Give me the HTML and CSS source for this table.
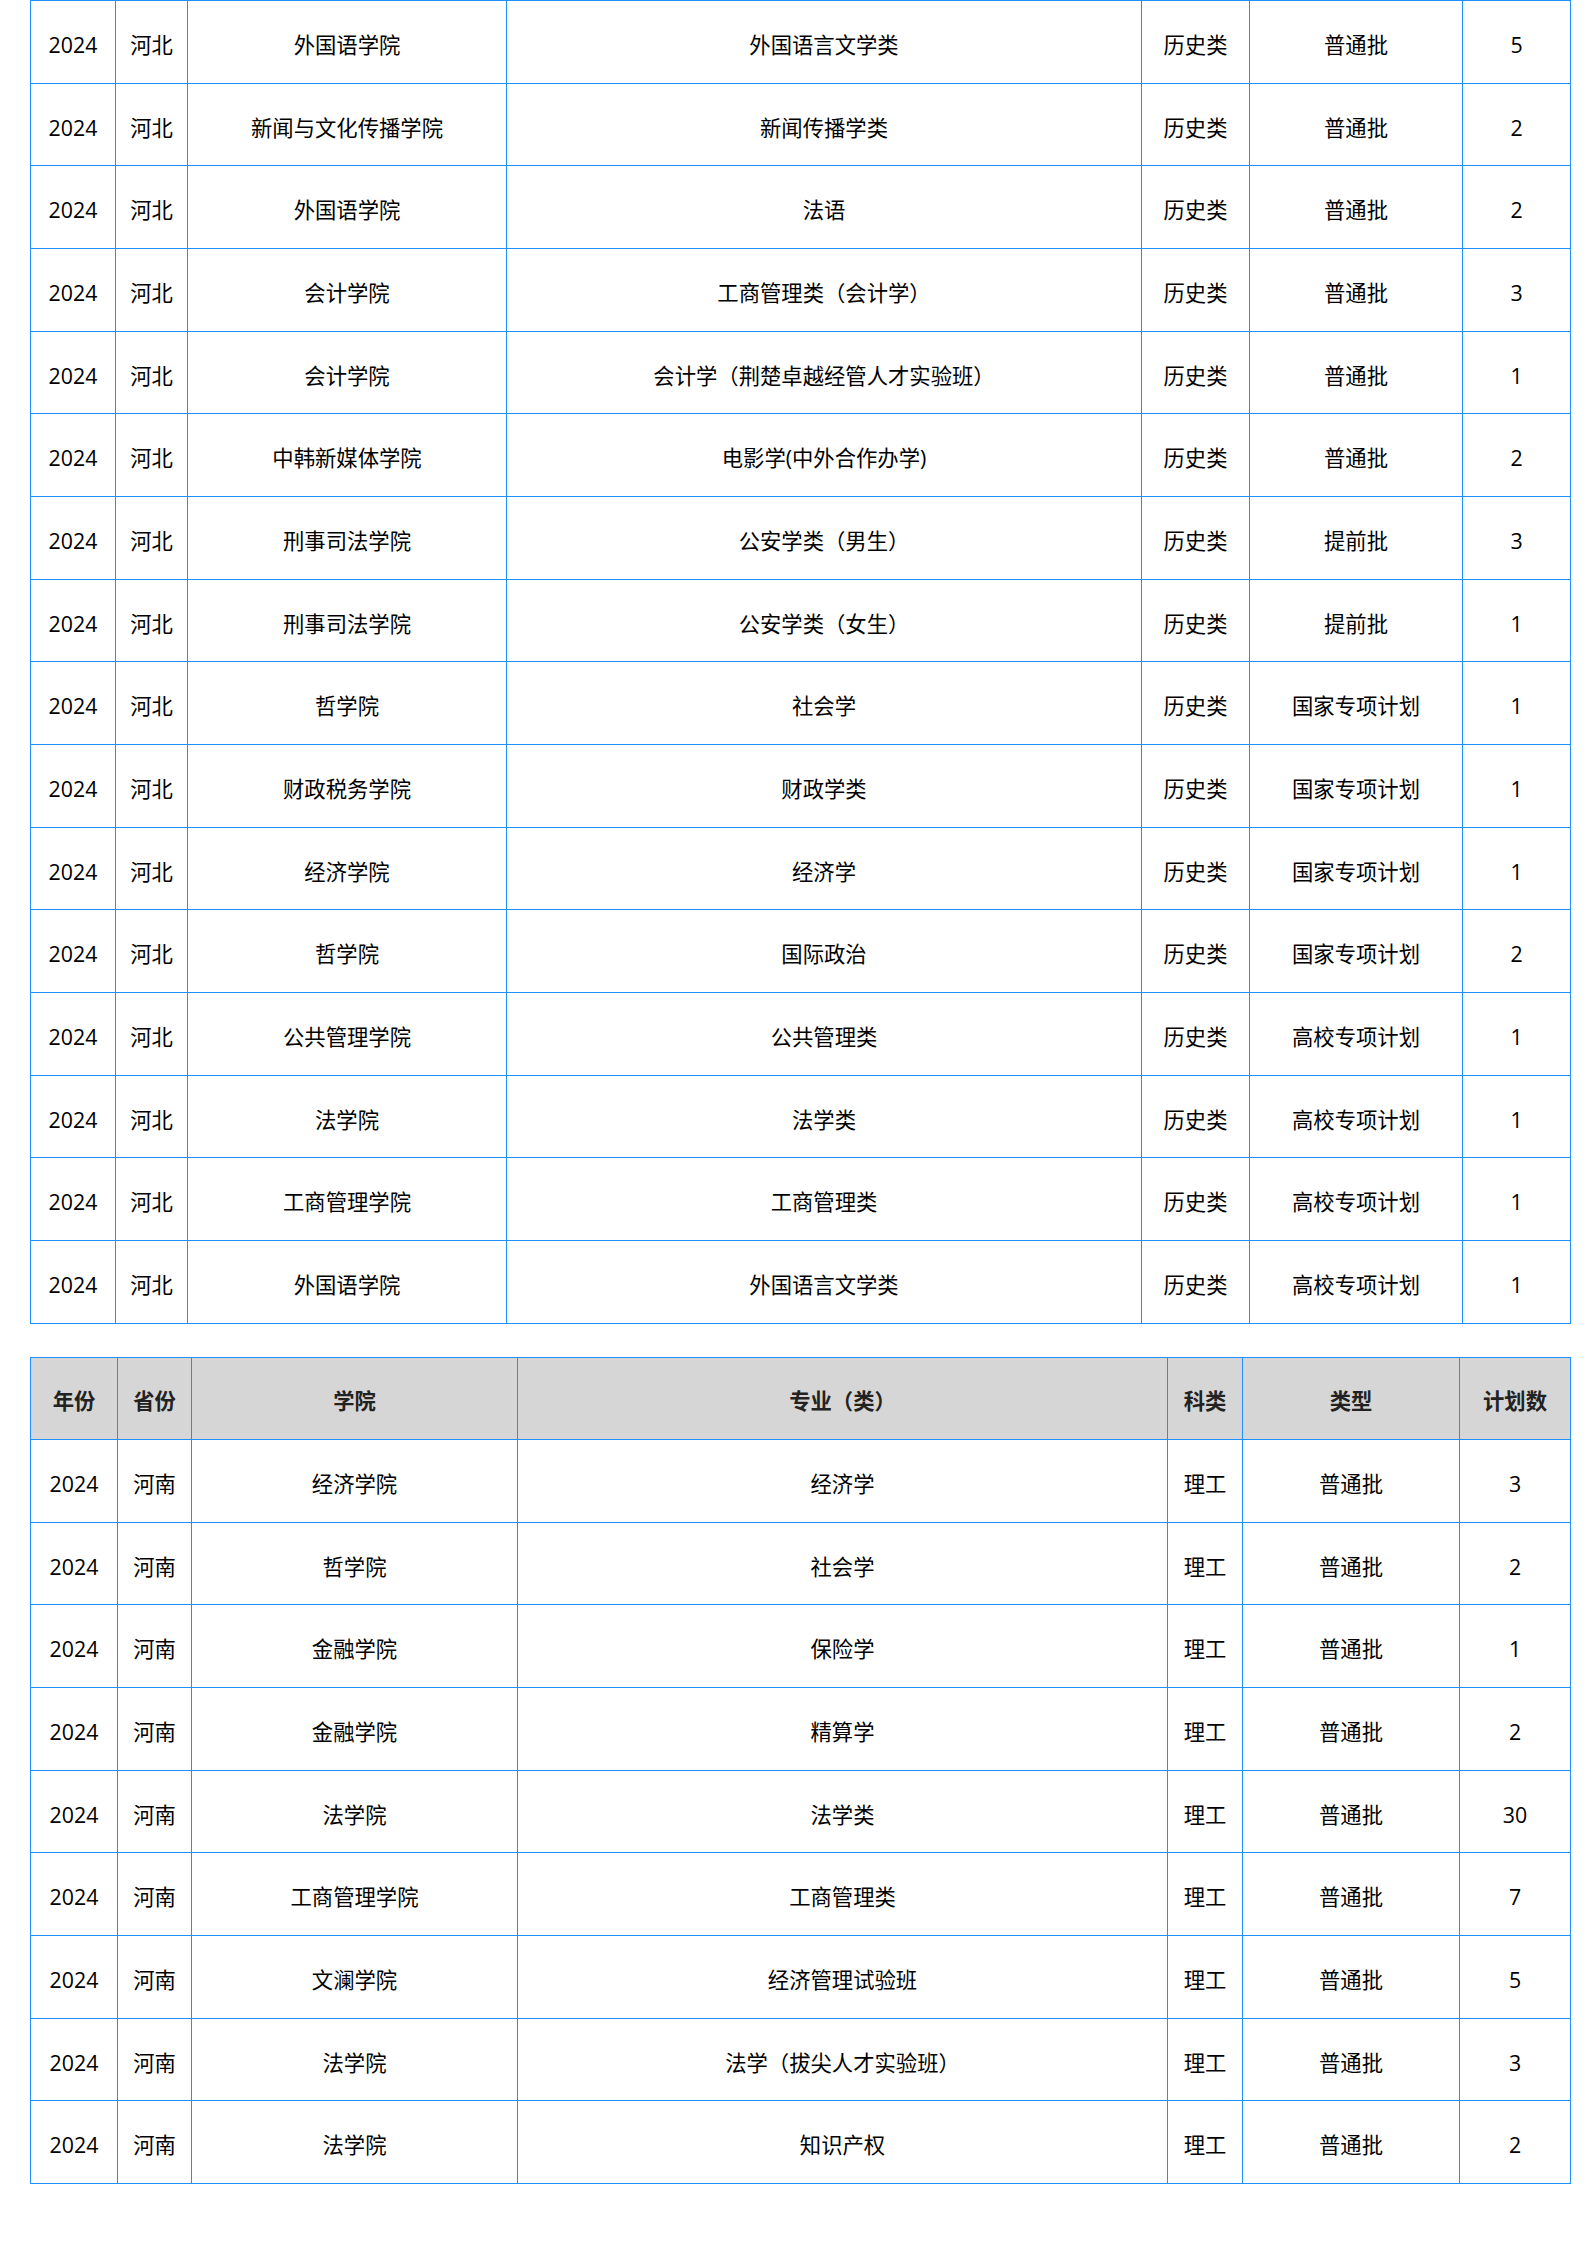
FILE: index.html
```html
<!DOCTYPE html>
<html lang="zh-CN">
<head>
<meta charset="utf-8">
<title>招生计划</title>
<link rel="stylesheet" href="styles.css">
</head>
<body>
<div class="page">
  <table class="plan plan-a">
    <colgroup>
      <col class="a1"><col class="a2"><col class="a3"><col class="a4"><col class="a5"><col class="a6"><col class="a7">
    </colgroup>
    <tbody>
      <tr><td>2024</td><td>河北</td><td>外国语学院</td><td>外国语言文学类</td><td>历史类</td><td>普通批</td><td>5</td></tr>
      <tr><td>2024</td><td>河北</td><td>新闻与文化传播学院</td><td>新闻传播学类</td><td>历史类</td><td>普通批</td><td>2</td></tr>
      <tr><td>2024</td><td>河北</td><td>外国语学院</td><td>法语</td><td>历史类</td><td>普通批</td><td>2</td></tr>
      <tr><td>2024</td><td>河北</td><td>会计学院</td><td>工商管理类（会计学）</td><td>历史类</td><td>普通批</td><td>3</td></tr>
      <tr><td>2024</td><td>河北</td><td>会计学院</td><td>会计学（荆楚卓越经管人才实验班）</td><td>历史类</td><td>普通批</td><td>1</td></tr>
      <tr><td>2024</td><td>河北</td><td>中韩新媒体学院</td><td>电影学(中外合作办学)</td><td>历史类</td><td>普通批</td><td>2</td></tr>
      <tr><td>2024</td><td>河北</td><td>刑事司法学院</td><td>公安学类（男生）</td><td>历史类</td><td>提前批</td><td>3</td></tr>
      <tr><td>2024</td><td>河北</td><td>刑事司法学院</td><td>公安学类（女生）</td><td>历史类</td><td>提前批</td><td>1</td></tr>
      <tr><td>2024</td><td>河北</td><td>哲学院</td><td>社会学</td><td>历史类</td><td>国家专项计划</td><td>1</td></tr>
      <tr><td>2024</td><td>河北</td><td>财政税务学院</td><td>财政学类</td><td>历史类</td><td>国家专项计划</td><td>1</td></tr>
      <tr><td>2024</td><td>河北</td><td>经济学院</td><td>经济学</td><td>历史类</td><td>国家专项计划</td><td>1</td></tr>
      <tr><td>2024</td><td>河北</td><td>哲学院</td><td>国际政治</td><td>历史类</td><td>国家专项计划</td><td>2</td></tr>
      <tr><td>2024</td><td>河北</td><td>公共管理学院</td><td>公共管理类</td><td>历史类</td><td>高校专项计划</td><td>1</td></tr>
      <tr><td>2024</td><td>河北</td><td>法学院</td><td>法学类</td><td>历史类</td><td>高校专项计划</td><td>1</td></tr>
      <tr><td>2024</td><td>河北</td><td>工商管理学院</td><td>工商管理类</td><td>历史类</td><td>高校专项计划</td><td>1</td></tr>
      <tr><td>2024</td><td>河北</td><td>外国语学院</td><td>外国语言文学类</td><td>历史类</td><td>高校专项计划</td><td>1</td></tr>
    </tbody>
  </table>

  <table class="plan plan-b">
    <colgroup>
      <col class="b1"><col class="b2"><col class="b3"><col class="b4"><col class="b5"><col class="b6"><col class="b7">
    </colgroup>
    <thead>
      <tr><th>年份</th><th>省份</th><th>学院</th><th>专业（类）</th><th>科类</th><th>类型</th><th>计划数</th></tr>
    </thead>
    <tbody>
      <tr><td>2024</td><td>河南</td><td>经济学院</td><td>经济学</td><td>理工</td><td>普通批</td><td>3</td></tr>
      <tr><td>2024</td><td>河南</td><td>哲学院</td><td>社会学</td><td>理工</td><td>普通批</td><td>2</td></tr>
      <tr><td>2024</td><td>河南</td><td>金融学院</td><td>保险学</td><td>理工</td><td>普通批</td><td>1</td></tr>
      <tr><td>2024</td><td>河南</td><td>金融学院</td><td>精算学</td><td>理工</td><td>普通批</td><td>2</td></tr>
      <tr><td>2024</td><td>河南</td><td>法学院</td><td>法学类</td><td>理工</td><td>普通批</td><td>30</td></tr>
      <tr><td>2024</td><td>河南</td><td>工商管理学院</td><td>工商管理类</td><td>理工</td><td>普通批</td><td>7</td></tr>
      <tr><td>2024</td><td>河南</td><td>文澜学院</td><td>经济管理试验班</td><td>理工</td><td>普通批</td><td>5</td></tr>
      <tr><td>2024</td><td>河南</td><td>法学院</td><td>法学（拔尖人才实验班）</td><td>理工</td><td>普通批</td><td>3</td></tr>
      <tr><td>2024</td><td>河南</td><td>法学院</td><td>知识产权</td><td>理工</td><td>普通批</td><td>2</td></tr>
    </tbody>
  </table>
</div>
</body>
</html>
```

FILE: styles.css
```css
html, body {
  margin: 0;
  padding: 0;
  background: #ffffff;
}

.page {
  padding: 0 0 0 30px;
  font-family: "Open Sans", "Noto Sans CJK SC", sans-serif;
  font-size: 21.33px;
  color: #000000;
}

.plan {
  border-collapse: collapse;
  table-layout: fixed;
  width: 1541px;
}

.plan td,
.plan th {
  border: 1px solid #1e90ff;
  text-align: center;
  vertical-align: middle;
  padding: 6px 0 0 0;
  line-height: 1.3;
  white-space: nowrap;
}

.plan tr {
  height: 82.67px;
}

.plan th {
  background: #d6d6d6;
  color: #222222;
  font-weight: 700;
}

.plan-b {
  margin-top: 33px;
}

.a1 { width: 85px; }
.a2 { width: 72px; }
.a3 { width: 319px; }
.a4 { width: 635px; }
.a5 { width: 108px; }
.a6 { width: 213px; }
.a7 { width: 108px; }

.b1 { width: 87px; }
.b2 { width: 74px; }
.b3 { width: 326px; }
.b4 { width: 650px; }
.b5 { width: 75px; }
.b6 { width: 217px; }
.b7 { width: 111px; }
```
